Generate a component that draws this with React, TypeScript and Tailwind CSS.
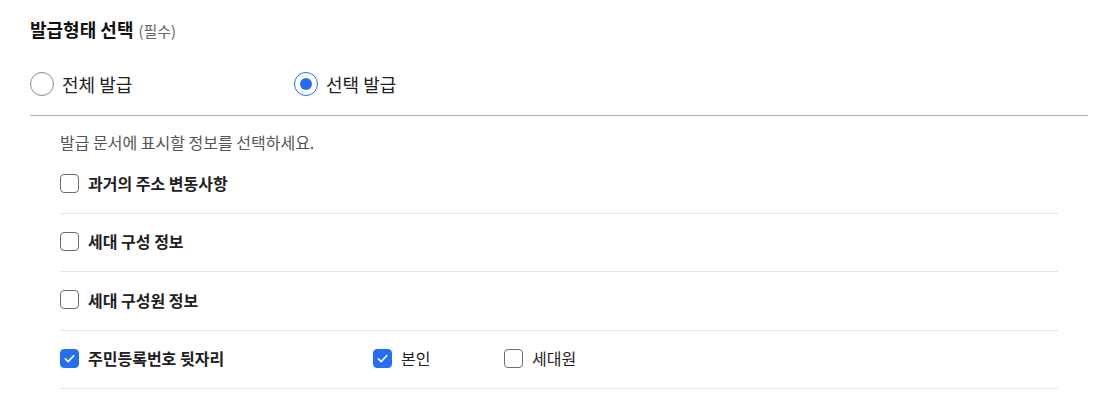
import React, { useState } from "react";

function Radio({ checked, label, onClick }: { checked: boolean; label: string; onClick: () => void }) {
  return (
    <button type="button" onClick={onClick} className="flex items-center gap-[8px]">
      <span
        className={`flex h-[24px] w-[24px] items-center justify-center rounded-full border bg-white ${
          checked ? "border-[#256ef4]" : "border-[#8a8a8a]"
        }`}
      >
        {checked ? <span className="h-[12px] w-[12px] rounded-full bg-[#256ef4]" /> : null}
      </span>
      <span className="text-[18px] leading-[24px] text-[#1e2124]">{label}</span>
    </button>
  );
}

function Check({
  checked,
  label,
  bold,
  onClick,
}: {
  checked: boolean;
  label: string;
  bold?: boolean;
  onClick: () => void;
}) {
  return (
    <button type="button" onClick={onClick} className="flex items-center gap-[9px]">
      <span
        className={`flex h-[19px] w-[19px] items-center justify-center rounded-[4px] border ${
          checked ? "border-[#256ef4] bg-[#256ef4]" : "border-[#6d6d6d] bg-white"
        }`}
      >
        {checked ? (
          <svg width="13" height="13" viewBox="0 0 14 14" fill="none">
            <path d="M2.5 7.3l3 3 6-6.3" stroke="white" strokeWidth="1.8" strokeLinecap="round" strokeLinejoin="round" />
          </svg>
        ) : null}
      </span>
      <span
        className={`text-[16px] leading-[24px] text-[#1e2124] ${bold ? "font-bold" : "font-normal"}`}
      >
        {label}
      </span>
    </button>
  );
}

export default function App() {
  const [mode, setMode] = useState<"all" | "select">("select");
  const [items, setItems] = useState({
    history: false,
    household: false,
    members: false,
    rrn: true,
    self: true,
    family: false,
  });
  const toggle = (k: keyof typeof items) => setItems((s) => ({ ...s, [k]: !s[k] }));

  return (
    <div
      className="min-h-[416px] w-[1118px] bg-white px-[30px] pt-[17px]"
      style={{ fontFamily: '"Noto Sans CJK KR", "Noto Sans", sans-serif' }}
    >
      <div className="flex items-baseline gap-[5px]">
        <span className="text-[18px] font-bold leading-[24px] text-[#111]">발급형태 선택</span>
        <span className="text-[15px] leading-[24px] text-[#666]">(필수)</span>
      </div>

      <div className="mt-[29px] flex items-center">
        <div className="w-[264px]">
          <Radio checked={mode === "all"} label="전체 발급" onClick={() => setMode("all")} />
        </div>
        <Radio checked={mode === "select"} label="선택 발급" onClick={() => setMode("select")} />
      </div>

      <div className="mt-[19px] h-px bg-[#b1b1b7]" />

      <div className="px-[30px] pt-[15px]">
        <p className="text-[16px] leading-[22px] text-[#555]">발급 문서에 표시할 정보를 선택하세요.</p>

        <div className="mt-[3px]">
          <div className="flex h-[58px] items-center border-b border-[#e4e4ea] pb-[3px]">
            <Check bold checked={items.history} label="과거의 주소 변동사항" onClick={() => toggle("history")} />
          </div>
          <div className="flex h-[58px] items-center border-b border-[#e4e4ea] pb-[3px]">
            <Check bold checked={items.household} label="세대 구성 정보" onClick={() => toggle("household")} />
          </div>
          <div className="flex h-[59px] items-center border-b border-[#e4e4ea] pb-[3px]">
            <Check bold checked={items.members} label="세대 구성원 정보" onClick={() => toggle("members")} />
          </div>
          <div className="flex h-[58px] items-center border-b border-[#e4e4ea] pb-[3px]">
            <div className="w-[313px]">
              <Check bold checked={items.rrn} label="주민등록번호 뒷자리" onClick={() => toggle("rrn")} />
            </div>
            <div className="w-[131px]">
              <Check checked={items.self} label="본인" onClick={() => toggle("self")} />
            </div>
            <Check checked={items.family} label="세대원" onClick={() => toggle("family")} />
          </div>
        </div>
      </div>
    </div>
  );
}
